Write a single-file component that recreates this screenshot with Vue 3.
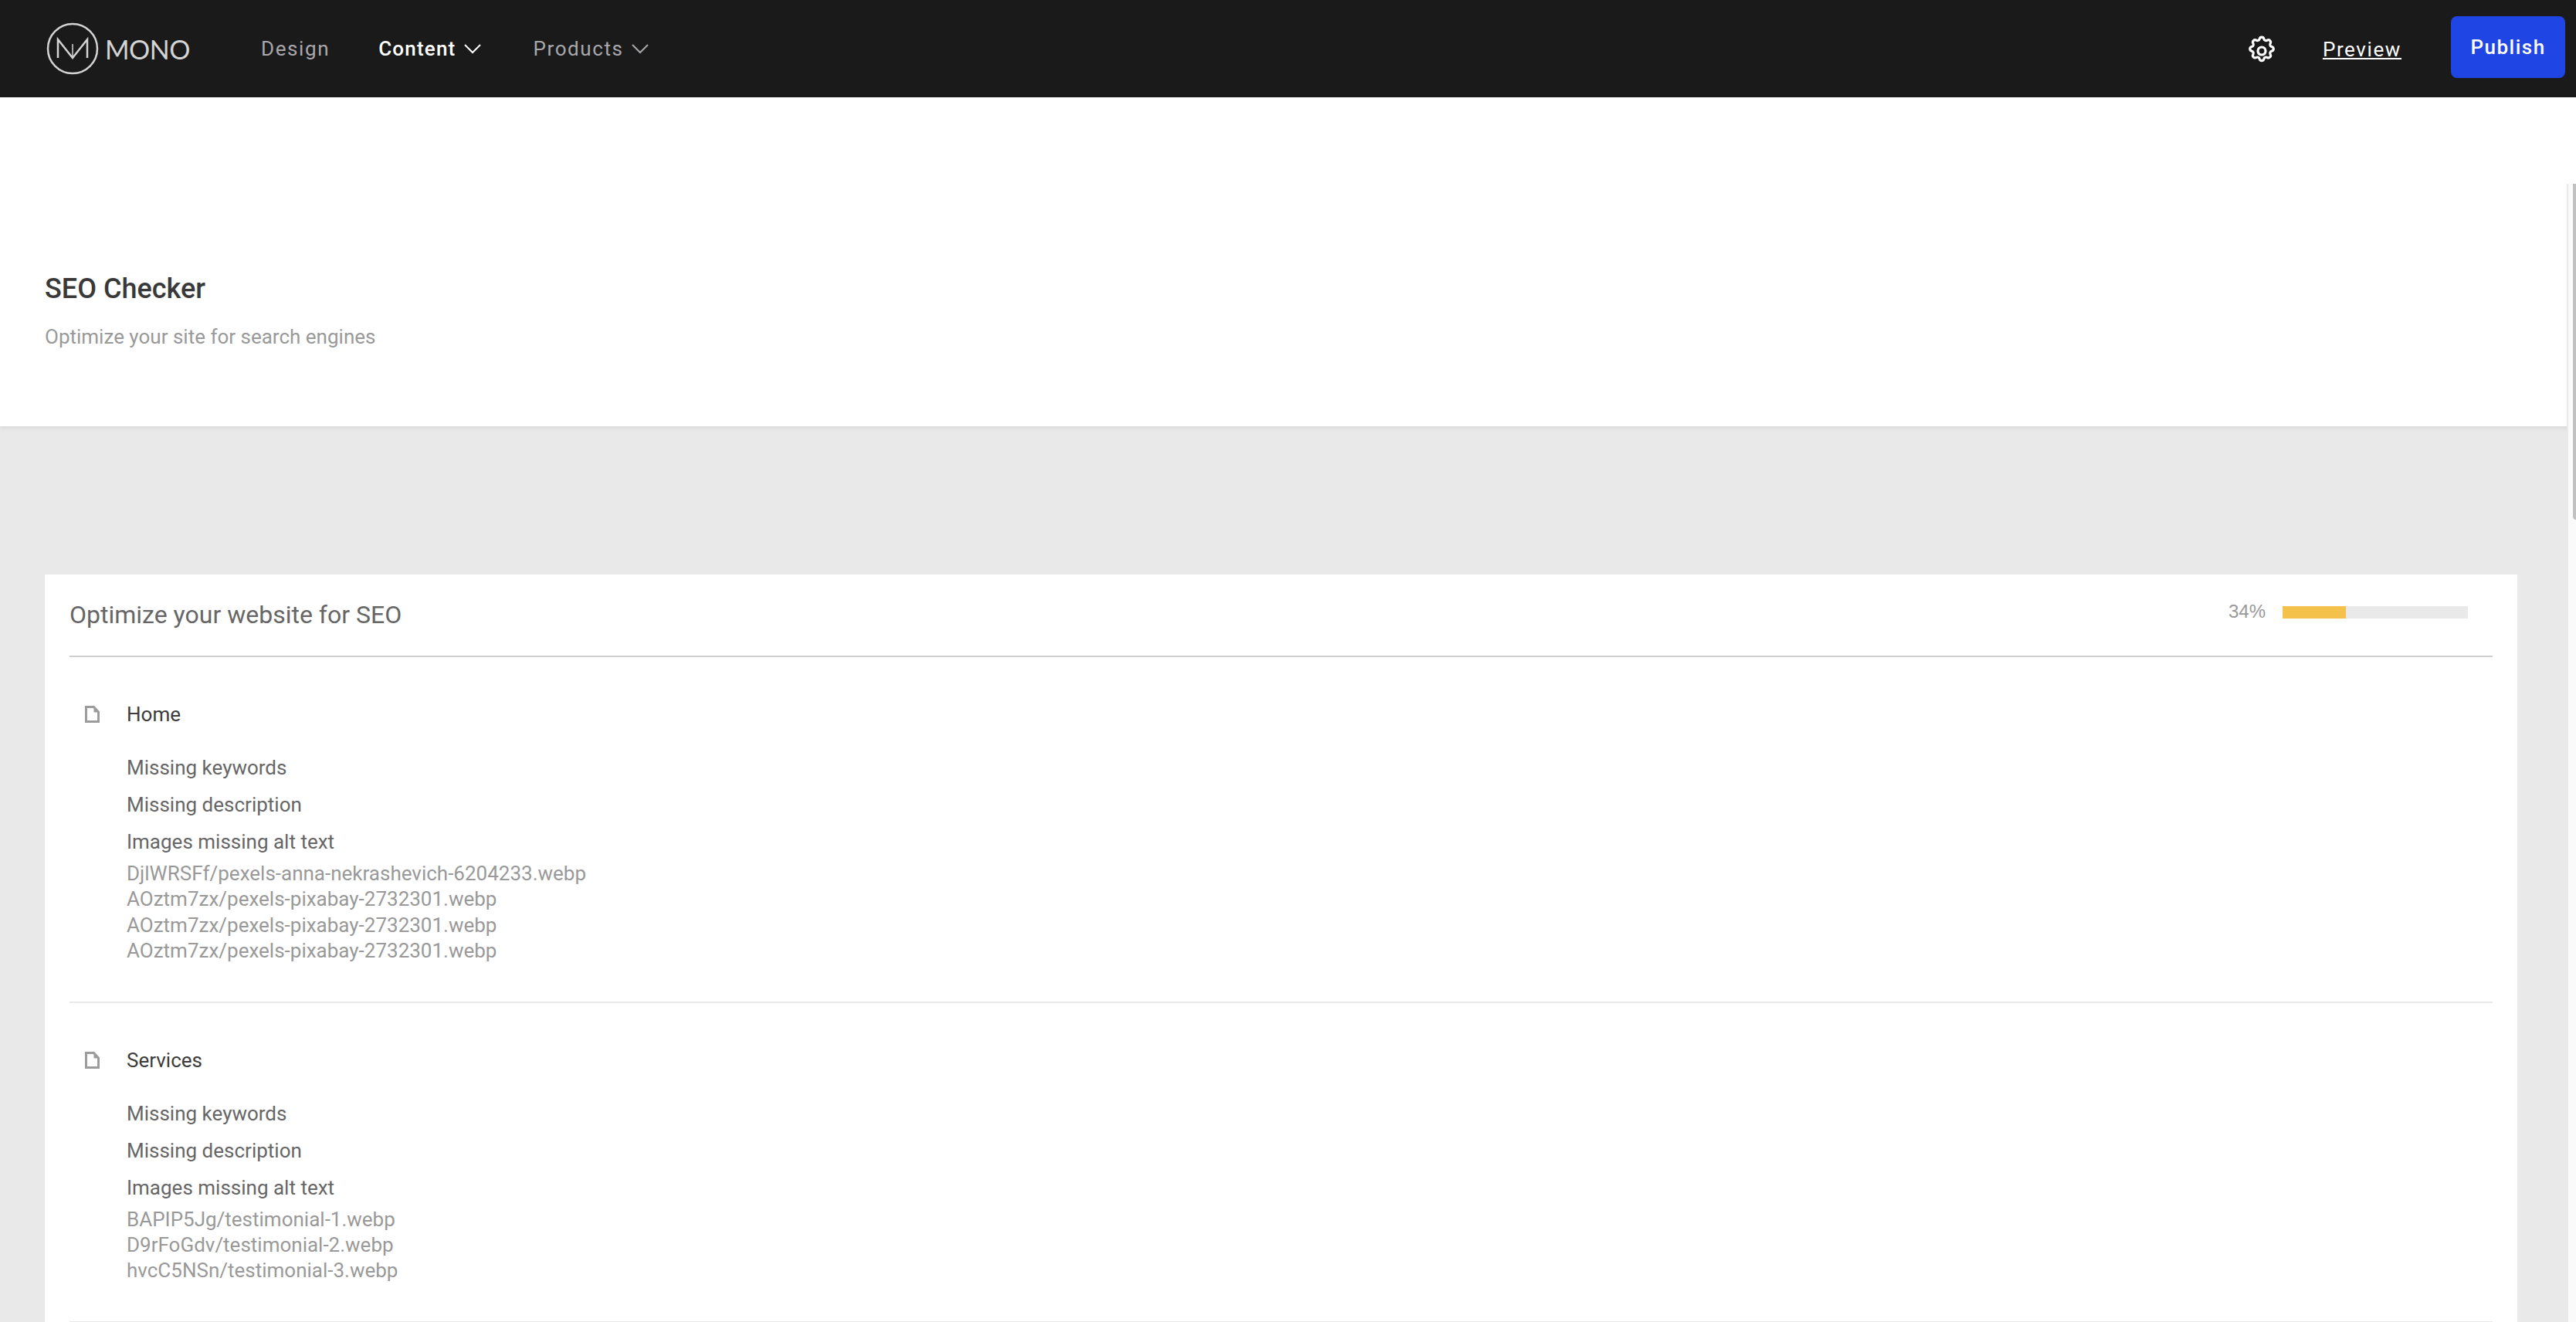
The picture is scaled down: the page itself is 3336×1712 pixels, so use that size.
<script setup>
const pages = [
  { name: 'Home', images: ['DjlWRSFf/pexels-anna-nekrashevich-6204233.webp', 'AOztm7zx/pexels-pixabay-2732301.webp', 'AOztm7zx/pexels-pixabay-2732301.webp', 'AOztm7zx/pexels-pixabay-2732301.webp'] },
  { name: 'Services', images: ['BAPIP5Jg/testimonial-1.webp', 'D9rFoGdv/testimonial-2.webp', 'hvcC5NSn/testimonial-3.webp'] }
]
</script>

<template>
  <div class="app">
    <header class="nav">
      <div class="logo">
        <svg width="68" height="68" viewBox="0 0 68 68" fill="none" stroke="#d4d4d4">
          <circle cx="34" cy="34" r="32" stroke-width="2.500" />
          <path d="M15 46V22L34 46L53 22V46" stroke-width="2.500" />
          <path d="M34 46V28" stroke-width="1.500" />
        </svg>
        <span class="logo-text">MONO</span>
      </div>
      <nav class="links">
        <a class="link">Design</a>
        <a class="link active">Content <svg class="chev" width="22" height="22" viewBox="0 0 22 22" fill="none" stroke="currentColor" stroke-width="2"><path d="M1 6l10 10L21 6" /></svg></a>
        <a class="link">Products <svg class="chev" width="22" height="22" viewBox="0 0 22 22" fill="none" stroke="currentColor" stroke-width="2"><path d="M1 6l10 10L21 6" /></svg></a>
      </nav>
      <div class="right">
        <svg class="gear" width="40" height="40" viewBox="0 0 24 24" fill="none" stroke="#fff" stroke-width="1.900" stroke-linejoin="round" stroke-linecap="round">
          <path d="M10.3 2.600c.4-1.800 3-1.800 3.400 0a1.700 1.700 0 0 0 2.600 1.100c1.500-.9 3.300.8 2.400 2.400a1.700 1.700 0 0 0 1.100 2.600c1.800.4 1.800 3 0 3.400a1.700 1.700 0 0 0-1.100 2.600c.9 1.500-.8 3.300-2.400 2.400a1.700 1.700 0 0 0-2.600 1.100c-.4 1.800-3 1.800-3.400 0a1.700 1.700 0 0 0-2.600-1.100c-1.500.9-3.300-.8-2.400-2.400a1.700 1.700 0 0 0-1.100-2.600c-1.800-.4-1.800-3 0-3.400a1.700 1.700 0 0 0 1.100-2.600c-.9-1.500.8-3.300 2.400-2.400a1.700 1.700 0 0 0 2.600-1.100z" />
          <circle cx="12" cy="12" r="3" />
        </svg>
        <a class="preview">Preview</a>
        <button class="publish">Publish</button>
      </div>
    </header>
    <section class="hero">
      <h1>SEO Checker</h1>
      <p>Optimize your site for search engines</p>
    </section>
    <main class="content">
      <div class="card">
        <div class="card-head">
          <h2>Optimize your website for SEO</h2>
          <div class="progress">
            <span class="pct">34%</span>
            <div class="track"><div class="fill" :style="{ width: '34%' }"></div></div>
          </div>
        </div>
        <div v-for="page in pages" :key="page.name" class="page">
          <div class="page-title">
            <svg class="doc" width="24" height="24" viewBox="0 0 24 24" fill="none" stroke="#9c9c9c" stroke-width="3"><path d="M4.500 2.500H14.500L20.500 9V21.500H4.500z" /><path d="M15 4l4 5h-4z" fill="#9c9c9c" stroke-width="1" /></svg>
            <span>{{ page.name }}</span>
          </div>
          <div class="issue">Missing keywords</div>
          <div class="issue">Missing description</div>
          <div class="issue">Images missing alt text</div>
          <div class="images">
            <div v-for="(img, i) in page.images" :key="i">{{ img }}</div>
          </div>
        </div>
      </div>
    </main>
    <div class="scrollbar"><div class="thumb"></div></div>
  </div>
</template>

<style>
html, body { margin: 0; padding: 0; height: 100%; overflow: hidden; background: #e9e9e9; }
</style>

<style scoped>
.app { width: 3336px; height: 1712px; overflow: hidden; position: relative; background: #e9e9e9; font-family: Roboto, sans-serif; }
.nav { height: 126px; background: #1a1a1a; display: flex; align-items: center; box-sizing: border-box; padding-left: 60px; }
.logo { display: flex; align-items: center; width: 278px; }
.logo-text { font-family: Lato, sans-serif; font-size: 34px; color: #d4d4d4; margin-left: 8px; font-weight: 400; letter-spacing: -0.500px; }
.links { display: flex; align-items: center; gap: 63px; }
.link { font-size: 26px; letter-spacing: 1.600px; color: #a8a8ad; font-weight: 400; display: flex; align-items: center; gap: 10px; }
.active { color: #fff; font-weight: 500; letter-spacing: 1.200px; gap: 11px; margin-right: 4px; }
.right { margin-left: auto; display: flex; align-items: center; }
.gear { margin-right: 59px; margin-top: 5px; }
.preview { font-size: 26px; letter-spacing: 1.600px; color: #fff; text-decoration: underline; font-weight: 400; margin-right: 64px; margin-top: 2px; }
.publish { width: 148px; height: 80px; margin-right: 14px; border: 0; border-radius: 8px; background: #2045e5; color: #fff; font: 500 26px Roboto, sans-serif; letter-spacing: 1.500px; padding: 0; margin-top: -4px; }
.hero { height: 426px; background: #fff; box-sizing: border-box; padding: 226px 0 0 58px; box-shadow: 0 2px 6px rgba(0,0,0,.08); position: relative; }
.hero h1 { margin: 0; font-size: 36px; line-height: 44px; font-weight: 500; color: #393939; }
.hero p { margin: 23px 0 0; font-size: 26px; line-height: 34px; color: #999; font-weight: 400; }
.content { padding: 192px 0 0 58px; }
.card { width: 3202px; background: #fff; box-sizing: border-box; padding: 0 32px; height: 1000px; }
.card-head { height: 105px; border-bottom: 2px solid #d0d0d0; display: flex; justify-content: space-between; }
.card-head h2 { margin: 30px 0 0; font-size: 32px; line-height: 44px; font-weight: 400; color: #666; }
.progress { display: flex; align-items: center; height: 100px; margin-right: 32px; margin-top: -2px; }
.pct { font-family: "Liberation Sans", sans-serif; font-size: 24px; color: #999; margin-right: 22px; }
.track { width: 240px; height: 16px; background: #e9e9e9; margin-top: 2px; }
.fill { height: 100%; background: #f4c24a; }
.page { padding: 56px 0 48px; border-bottom: 2px solid #e9e9e9; }
.page-title { display: flex; align-items: center; font-size: 26px; line-height: 36px; color: #3c3c3c; gap: 33px; padding-left: 17px; margin-bottom: 33px; }
.issue { font-size: 26px; line-height: 36px; color: #666; margin: 0 0 12px 74px; }
.images { margin: -5px 0 0 74px; font-size: 26px; line-height: 33.400px; color: #999; }
.scrollbar { position: absolute; top: 238px; right: 0; width: 12px; bottom: 0; background: #fafafa; border-left: 2px solid #e9e9e9; box-sizing: border-box; }
.thumb { height: 435px; width: 4px; margin-left: 6px; background: #c1c1c1; border-bottom-left-radius: 4px; }
</style>
